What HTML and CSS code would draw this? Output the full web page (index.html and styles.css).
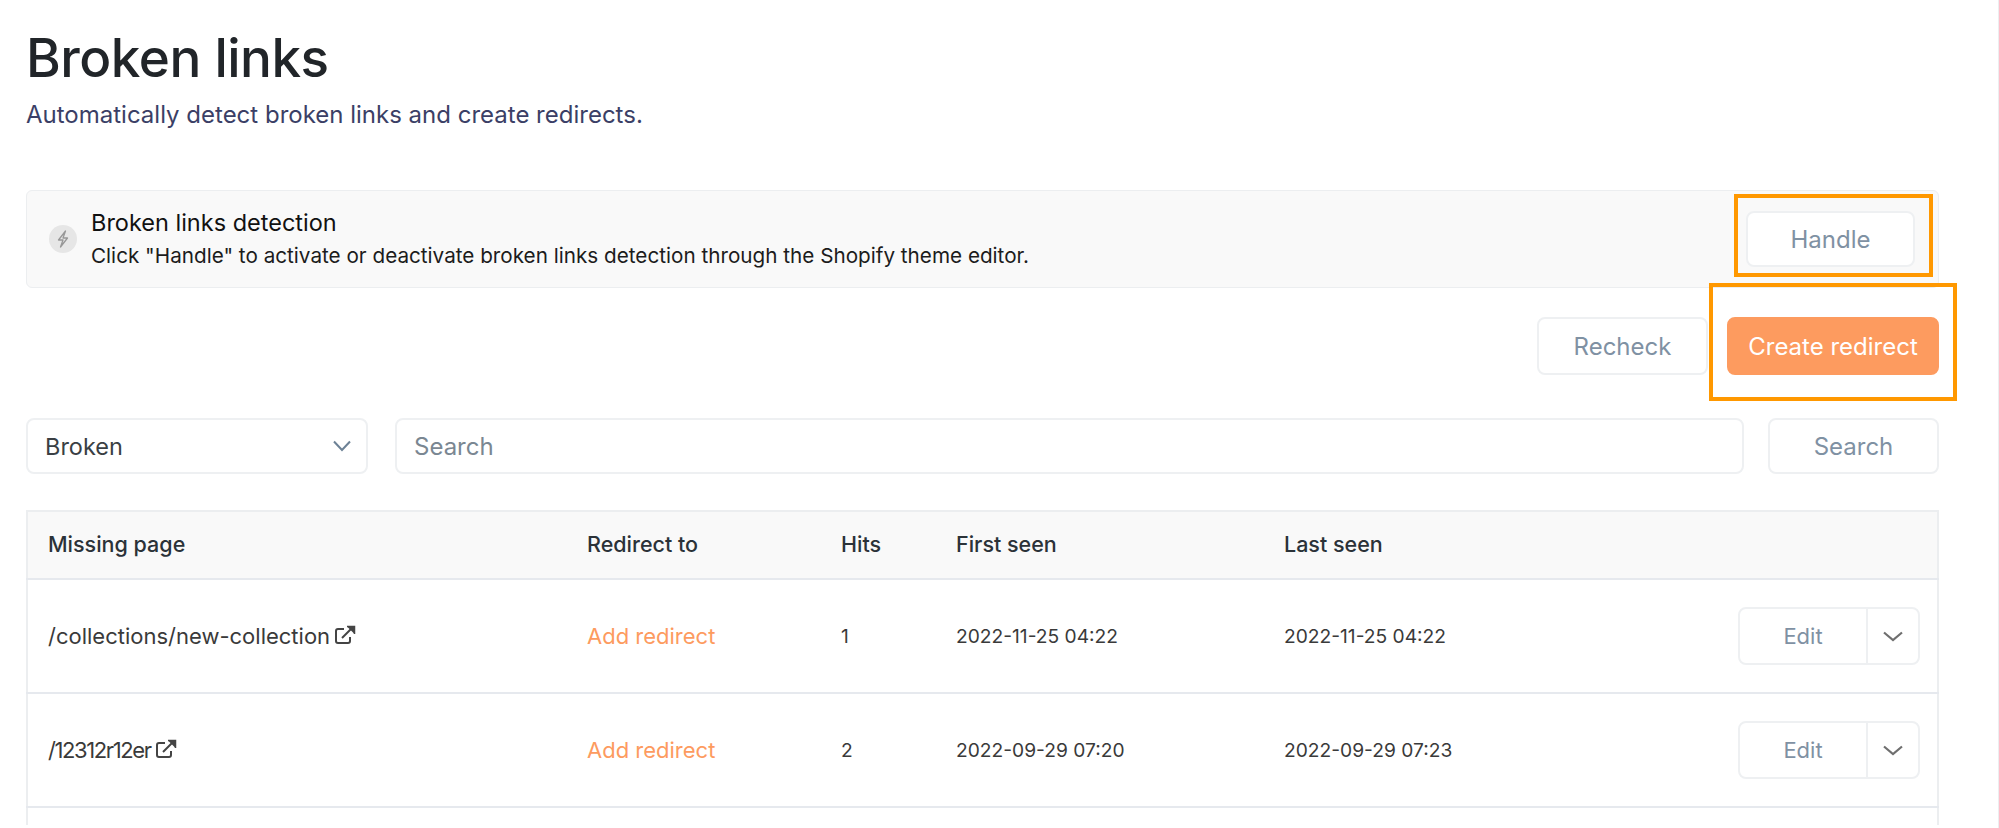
FILE: index.html
```html
<!DOCTYPE html>
<html lang="en">
<head>
<meta charset="utf-8">
<title>Broken links</title>
<link rel="stylesheet" href="styles.css">
</head>
<body>
<main class="page">
  <header class="head">
    <h1 class="title">Broken links</h1>
    <p class="subtitle">Automatically detect broken links and create redirects.</p>
  </header>

  <section class="banner">
    <span class="banner-icon">
      <svg width="16" height="18" viewBox="0 0 16 18" fill="none" stroke="#979797" stroke-width="1.3" stroke-linejoin="round"><path d="M10.500 1 3.500 10h4.500l-2.500 7L12.500 8H8z"/></svg>
    </span>
    <div class="banner-text">
      <h2 class="banner-title">Broken links detection</h2>
      <p class="banner-desc">Click "Handle" to activate or deactivate broken links detection through the Shopify theme editor.</p>
    </div>
    <div class="marked marked-handle">
      <button class="btn btn-handle">Handle</button>
      <span class="mark mark-handle"></span>
    </div>
  </section>

  <div class="actions">
    <button class="btn btn-recheck">Recheck</button>
    <div class="marked">
      <button class="btn btn-primary">Create redirect</button>
      <span class="mark mark-create"></span>
    </div>
  </div>

  <div class="filters">
    <div class="select">
      <span>Broken</span>
      <svg width="20" height="12" viewBox="0 0 20 12" fill="none" stroke="#6d8296" stroke-width="2"><path d="M2 1.500 10 10l8-8.500"/></svg>
    </div>
    <div class="search-input">Search</div>
    <button class="btn btn-search">Search</button>
  </div>

  <table class="grid">
    <colgroup>
      <col class="c-page"><col class="c-redirect"><col class="c-hits"><col class="c-first"><col class="c-last"><col>
    </colgroup>
    <thead>
      <tr><th>Missing page</th><th>Redirect to</th><th>Hits</th><th>First seen</th><th>Last seen</th><th></th></tr>
    </thead>
    <tbody>
      <tr>
        <td><span class="path">/collections/new-collection<svg class="ext" width="22" height="20" viewBox="0 0 22 20" fill="none" stroke="#444" stroke-width="2"><path d="M10 4H4a2 2 0 0 0-2 2v10a2 2 0 0 0 2 2h10a2 2 0 0 0 2-2v-4"/><path d="M8 13 19 2"/><path d="M13 1.500h7.500V9" fill="#444" stroke-width="1.500"/></svg></span></td>
        <td><a class="link">Add redirect</a></td>
        <td>1</td><td>2022-11-25 04:22</td><td>2022-11-25 04:22</td>
        <td><div class="split"><span class="split-main">Edit</span><span class="split-caret"><svg width="20" height="11" viewBox="0 0 20 11" fill="none" stroke="#6f6f6f" stroke-width="2.200"><path d="M1 1.500 10 9l9-7.500"/></svg></span></div></td>
      </tr>
      <tr>
        <td><span class="path path-digits">/12312r12er<svg class="ext" width="22" height="20" viewBox="0 0 22 20" fill="none" stroke="#444" stroke-width="2"><path d="M10 4H4a2 2 0 0 0-2 2v10a2 2 0 0 0 2 2h10a2 2 0 0 0 2-2v-4"/><path d="M8 13 19 2"/><path d="M13 1.500h7.500V9" fill="#444" stroke-width="1.500"/></svg></span></td>
        <td><a class="link">Add redirect</a></td>
        <td>2</td><td>2022-09-29 07:20</td><td>2022-09-29 07:23</td>
        <td><div class="split"><span class="split-main">Edit</span><span class="split-caret"><svg width="20" height="11" viewBox="0 0 20 11" fill="none" stroke="#6f6f6f" stroke-width="2.200"><path d="M1 1.500 10 9l9-7.500"/></svg></span></div></td>
      </tr>
      <tr class="row-cut"><td colspan="6"></td></tr>
    </tbody>
  </table>
</main>
</body>
</html>
```
FILE: styles.css
```css
* { box-sizing: border-box; }
html, body { margin: 0; height: 828px; overflow: hidden; background: #fff; }
body { font-family: Inter, "Liberation Sans", sans-serif; color: #212529; border-right: 1px solid #eceef0; }
.page { padding: 0 59px 0 26px; }

.head { padding-top: 25px; height: 190px; }
.title { margin: 0; font-size: 53px; line-height: 66px; font-weight: 500; letter-spacing: -0.5px; color: #212529; }
.subtitle { margin: 9px 0 0; font-size: 24px; line-height: 30px; font-weight: 400; color: #3b3f66; }

.banner { display: flex; align-items: center; height: 98px; padding: 0 23px 0 12px; background: #f9f9f9; border: 1px solid #eceef0; border-radius: 6px; }
.banner-icon { flex: none; display: flex; align-items: center; justify-content: center; width: 28px; height: 28px; border-radius: 50%; background: #e6e6e6; margin: 0 14px 0 10px; }
.banner-text { flex: 1; }
.banner-title { margin: 0 0 6px; font-size: 23.5px; line-height: 28px; font-weight: 400; color: #111; }
.banner-desc { margin: 0; font-size: 20.7px; line-height: 26px; color: #1c1c1c; }

.btn { font: inherit; font-size: 24px; color: #7f91a3; background: #fff; border: 2px solid #eef0f2; border-radius: 8px; cursor: pointer; padding: 0; }
.marked { position: relative; display: flex; }
.btn-handle { width: 169px; height: 56px; }
.mark { position: absolute; border: 4px solid #ff9800; pointer-events: none; }
.mark-handle { left: -12px; top: -17px; width: 199px; height: 83px; }
.mark-create { left: -18px; top: -34px; width: 248px; height: 118px; }

.actions { display: flex; justify-content: flex-end; gap: 19px; padding-top: 29px; height: 130px; }
.btn-recheck { width: 171px; height: 58px; }
.btn-primary { width: 212px; height: 58px; color: #fff; background: #fd9b5f; border-color: #fd9b5f; }

.filters { display: flex; align-items: stretch; height: 56px; margin-bottom: 36px; }
.select { flex: none; width: 342px; display: flex; align-items: center; justify-content: space-between; padding: 0 14px 0 17px; border: 2px solid #eef0f2; border-radius: 8px; font-size: 23.5px; color: #3a3f44; }
.search-input { flex: none; width: 1349px; margin-left: 27px; display: flex; align-items: center; padding: 0 17px; border: 2px solid #eef0f2; border-radius: 8px; font-size: 24px; color: #7a8792; }
.btn-search { flex: none; width: 171px; margin-left: 24px; }

.grid { width: 1913px; table-layout: fixed; border-collapse: collapse; border: 2px solid #eceef0; border-bottom: 0; font-size: 19.2px; }
.c-page { width: 560px; } .c-redirect { width: 254px; } .c-hits { width: 115px; } .c-first { width: 328px; } .c-last { width: 300px; }
.grid th { height: 68px; padding: 0 0 2px 20px; background: #f9f9f9; text-align: left; font-weight: 500; font-size: 21.5px; color: #2b3238; border-bottom: 2px solid #e6e9ee; }
.grid th + th, .grid td + td { padding-left: 0; }
.grid td { height: 114px; padding: 0 0 0 20px; color: #3a3a3a; border-bottom: 2px solid #e6e9ee; }
.path { display: inline-flex; align-items: center; gap: 4px; font-size: 22px; }
.path-digits { letter-spacing: -1.4px; }
.ext { position: relative; top: -1px; }
.link { color: #fd9b5f; font-size: 22px; }
.split { display: flex; width: 182px; height: 58px; margin: 0 0 0 auto; position: relative; left: -17px; border: 2px solid #eef0f2; border-radius: 8px; }
.split-main { flex: 1; display: flex; align-items: center; justify-content: center; font-size: 22px; color: #7f91a3; border-right: 2px solid #eef0f2; }
.split-caret { flex: none; width: 50px; display: flex; align-items: center; justify-content: center; }
.grid .row-cut td { height: 18px; padding: 0; border-bottom: 0; }
```
